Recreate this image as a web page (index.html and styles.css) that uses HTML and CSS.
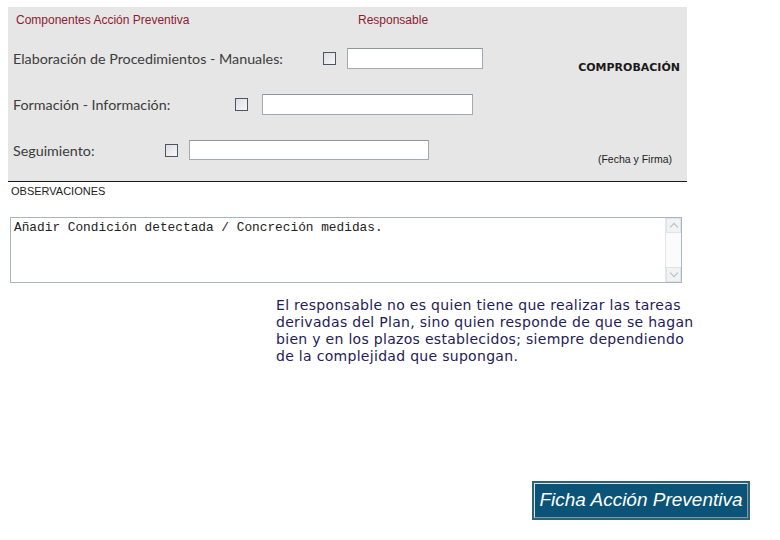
FILE: index.html
```html
<!doctype html>
<html>
<head>
<meta charset="utf-8">
<title>Ficha Acción Preventiva</title>
<link rel="stylesheet" href="styles.css">
</head>
<body>
	<div class="panel">
		<div class="panel-main">
			<div class="head">
				<span class="head-comp">Componentes Acción Preventiva</span>
				<span class="head-resp">Responsable</span>
			</div>
			<div class="row row1">
				<label class="lbl">Elaboración de Procedimientos - Manuales:</label>
				<span class="chk"></span>
				<input class="txt" type="text">
			</div>
			<div class="row row2">
				<label class="lbl">Formación - Información:</label>
				<span class="chk"></span>
				<input class="txt" type="text">
			</div>
			<div class="row row3">
				<label class="lbl">Seguimiento:</label>
				<span class="chk"></span>
				<input class="txt" type="text">
			</div>
		</div>
		<div class="panel-side">
			<b class="comprob">COMPROBACIÓN</b>
			<span class="firma">(Fecha y Firma)</span>
		</div>
	</div>

	<div class="obs-title">OBSERVACIONES</div>
	<div class="obs">
		<textarea class="obs-text">Añadir Condición detectada / Concreción medidas.</textarea>
		<div class="scroll">
			<span class="arrow up"></span>
			<span class="arrow down"></span>
		</div>
	</div>

	<p class="nota">El responsable no es quien tiene que realizar las tareas derivadas del Plan, sino quien responde de que se hagan bien y en los plazos establecidos; siempre dependiendo de la complejidad que supongan.</p>

	<a href="javascript:;" class="btn"><span>Ficha Acción Preventiva</span></a>
</body>
</html>
```
FILE: styles.css
```css
*{
	margin: 0;
	padding: 0;
	box-sizing: border-box;
}
body{
	background: #fff;
	font-family: "Liberation Sans", Arial, sans-serif;
	color: #222;
}

/* panel gris */
.panel{
	margin: 7px 0 0 8px;
	width: 679px;
	height: 175px;
	background: #e6e6e6;
	border-bottom: 1px solid #1a1a1a;
	display: flex;
}
.panel-main{
	flex: 1;
	padding-top: 5px;
}
.head{
	display: flex;
	height: 16px;
	font-size: 12px;
	color: #8a1c30;
	line-height: 16px;
}
.head-comp{
	margin-left: 8px;
	width: 342px;
}
.row{
	display: flex;
	align-items: center;
	height: 22px;
	margin-left: 5px;
	margin-top: 19px;
}
.row2, .row3{
	margin-top: 24px;
}
.lbl{
	font-family: "Lato", "Open Sans", sans-serif;
	font-size: 14.3px;
	color: #3c3c3c;
}
.row1 .lbl{ width: 310px; }
.row2 .lbl{ width: 222px; }
.row3 .lbl{ width: 152px; }
.chk{
	width: 13px;
	height: 13px;
	border: 1px solid #4a5563;
	background: linear-gradient(135deg, #dcdee2, #f7f7f8);
}
.txt{
	height: 21px;
	border: 1px solid #a3aab0;
	border-top-color: #8f979e;
	background: #fff;
	outline: none;
}
.row1 .txt{ width: 136px; margin-left: 11px; }
.row2 .txt{ width: 211px; margin-left: 14px; }
.row3 .txt{ width: 240px; margin-left: 11px; height: 20px; }

.panel-side{
	width: 120px;
	display: flex;
	flex-direction: column;
	align-items: flex-end;
	padding: 54px 7px 16px 0;
	justify-content: space-between;
	font-family: "DejaVu Sans", Verdana, sans-serif;
}
.comprob{
	font-size: 11px;
	color: #1a1a1a;
}
.firma{
	margin-right: 8px;
	font-family: "Liberation Sans", Arial, sans-serif;
	font-size: 10.5px;
	color: #222;
}

/* observaciones */
.obs-title{
	margin: 2px 0 0 11px;
	font-size: 11px;
	line-height: 14px;
	color: #222;
}
.obs{
	margin: 19px 0 0 10px;
	width: 672px;
	height: 66px;
	border: 1px solid #aab6be;
	display: flex;
	background: #fff;
}
.obs-text{
	flex: 1;
	border: none;
	resize: none;
	outline: none;
	font-family: "Liberation Mono", "Courier New", monospace;
	font-size: 12.8px;
	color: #222;
	padding: 2px 3px;
	overflow: hidden;
}
.scroll{
	width: 16px;
	border-left: 1px solid #e3e7ea;
	background: #fbfbfb;
	display: flex;
	flex-direction: column;
	justify-content: space-between;
}
.arrow{
	height: 15px;
	position: relative;
	background: #f1f2f3;
	border: 1px solid #e0e3e6;
}
.arrow::after{
	content: "";
	position: absolute;
	left: 4px;
	width: 5px;
	height: 5px;
	border-left: 1px solid #b5bcc2;
	border-top: 1px solid #b5bcc2;
}
.up::after{
	top: 5px;
	transform: rotate(45deg);
}
.down::after{
	top: 2px;
	transform: rotate(225deg);
}

/* nota */
.nota{
	margin: 14px 0 0 276px;
	width: 425px;
	font-family: "DejaVu Sans", Verdana, sans-serif;
	font-size: 14px;
	letter-spacing: 0.3px;
	line-height: 17px;
	color: #1f2058;
}

/* boton */
.btn{
	display: block;
	margin: 116px 0 0 532px;
	width: 218px;
	height: 39px;
	border: 2px solid #2f6273;
	background: #2f6273;
	text-decoration: none;
}
.btn span{
	display: block;
	height: 100%;
	border: 1px solid #d9e4e8;
	border-right-color: #7f9aa4;
	border-bottom-color: #7f9aa4;
	background: #0b5478;
	color: #fff;
	font-family: "Liberation Sans", Arial, sans-serif;
	font-style: italic;
	font-size: 19px;
	line-height: 31px;
	text-align: center;
	white-space: nowrap;
}
```
